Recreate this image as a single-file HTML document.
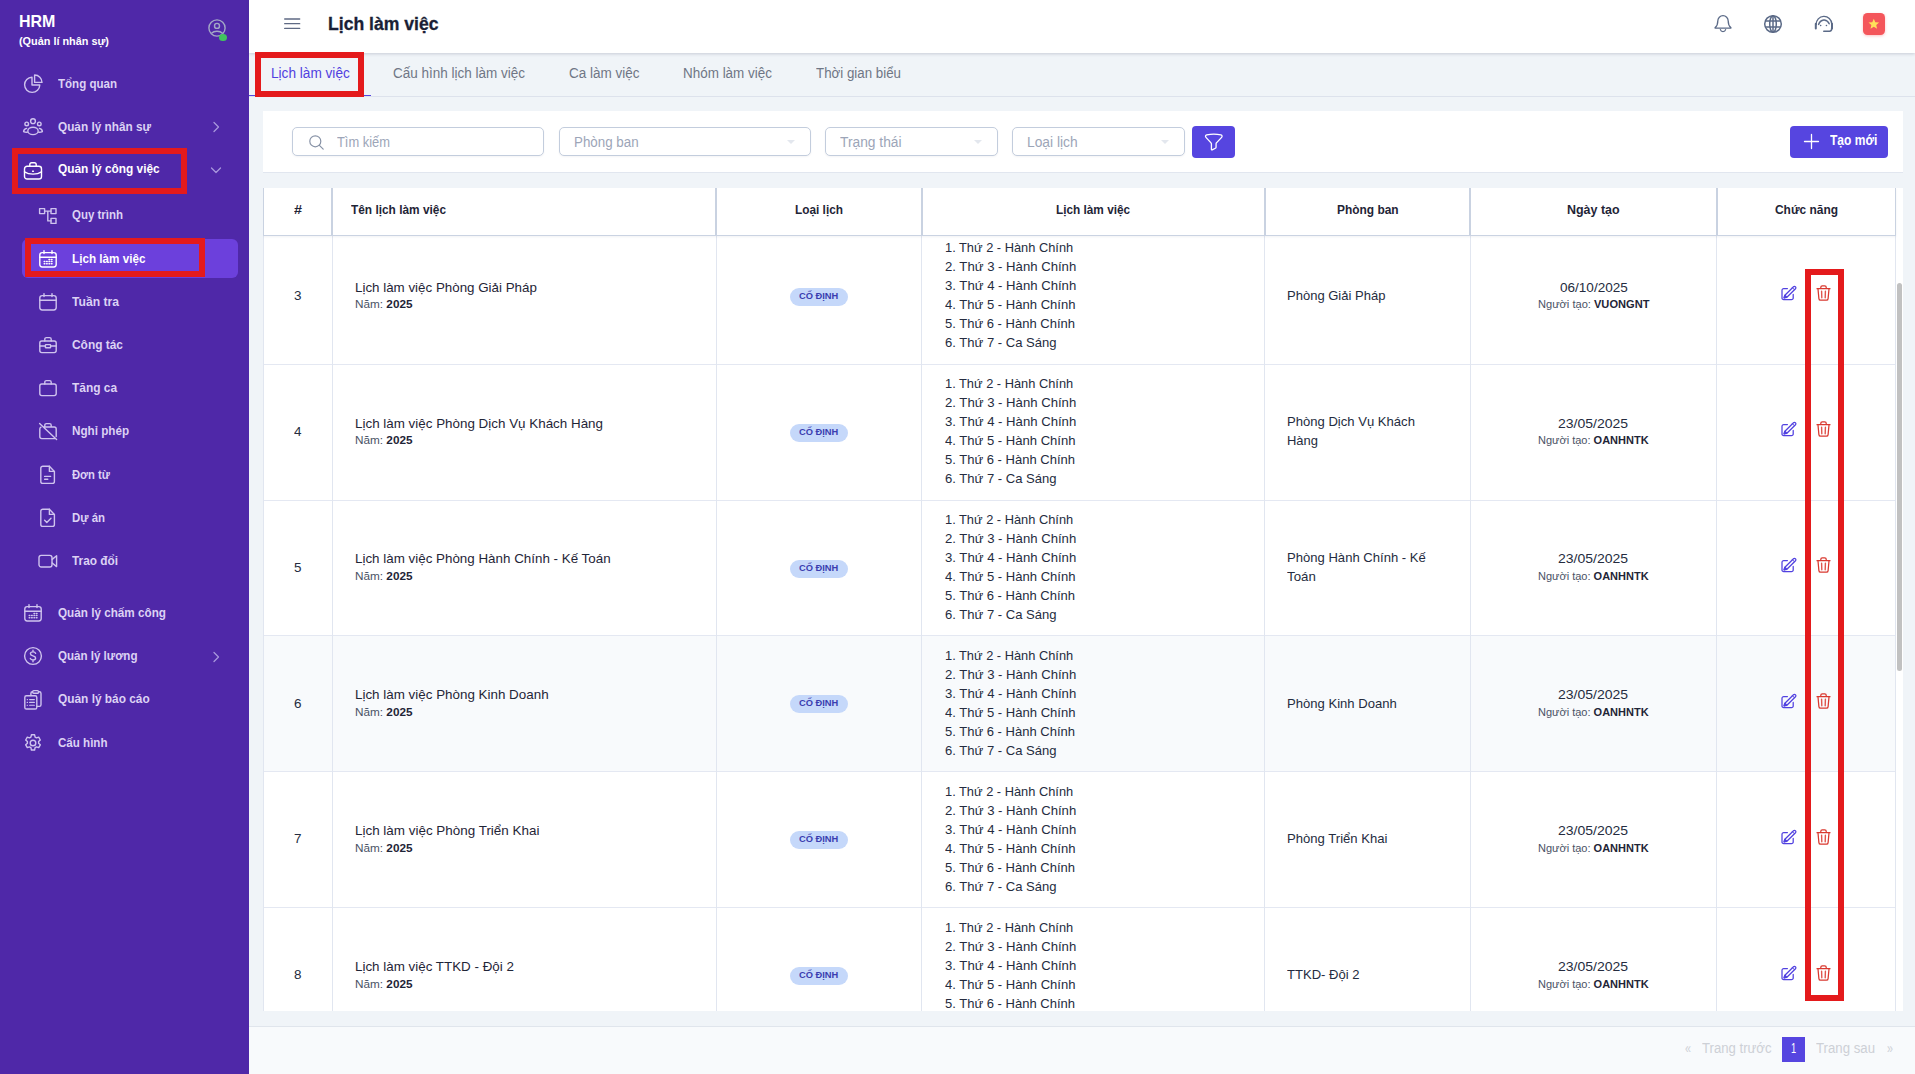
<!DOCTYPE html>
<html lang="vi">
<head>
<meta charset="utf-8">
<title>Lịch làm việc</title>
<style>
*{box-sizing:border-box;margin:0;padding:0}
html,body{width:1915px;height:1074px;overflow:hidden}
body{font-family:"Liberation Sans",sans-serif;background:#f0f4f8;position:relative;color:#1f2537;font-size:13px}
.abs{position:absolute}
svg{display:block;overflow:visible}
.t{position:absolute;display:block;white-space:nowrap;line-height:20px;transform-origin:0 50%}
.t b{font-weight:bold}
#sb{position:absolute;left:0;top:0;width:249px;height:1074px;background:#4f28a8}
.ic{position:absolute;width:20px;height:20px;stroke:#cfc3ee;fill:none;stroke-width:1.4;stroke-linecap:round;stroke-linejoin:round}
.ic.on{stroke:#fff}
.chev{position:absolute;width:12px;height:12px;stroke:#a897dd;fill:none;stroke-width:1.3;stroke-linecap:round;stroke-linejoin:round}
.actbg{position:absolute;left:22px;top:239px;width:216px;height:38.5px;background:#6c40dc;border-radius:6px}
.red{position:absolute;border:6px solid #e41a1c}
#hd{position:absolute;left:249px;top:0;width:1666px;height:53px;background:#fff;box-shadow:0 1px 3px rgba(60,70,100,.22)}
#tabs{position:absolute;left:249px;top:53px;width:1666px;height:44px;border-bottom:1px solid #dde2ec}
#tabs .ul{position:absolute;left:0;top:41.6px;width:122px;height:1.4px;background:#5546e0}
#fc{position:absolute;left:263px;top:111px;width:1640px;height:62px;background:#fff;border-bottom:1px solid #e1e6ef}
.inp{position:absolute;top:16.3px;height:28.4px;border:1px solid #c3cddd;border-radius:5px;background:#fff;box-shadow:0 1px 2px rgba(30,40,70,.05)}
.car{position:absolute;top:12px;width:0;height:0;border-left:4.5px solid transparent;border-right:4.5px solid transparent;border-top:4px solid #e3e7ee}
.btn{position:absolute;background:#5645e0;border-radius:4px;color:#fff}
#tb{position:absolute;left:263px;top:187.7px;width:1640px;height:823.3px;background:#fff;overflow:hidden}
#th{position:absolute;left:0;top:0;width:1633px;height:48.3px;background:#fff;border-bottom:1px solid #cad3e2;z-index:3;box-shadow:0 1px 2px rgba(120,130,150,.10)}
#th i{position:absolute;top:0;width:2px;height:47.3px;background:#c9d2e1}
.vl{position:absolute;top:48px;width:1px;height:776px;background:#e1e6f0;z-index:2}
.row{position:absolute;left:0;width:1633px;border-bottom:1px solid #e4e8f2}
.bd{position:absolute;width:58.3px;height:18px;border-radius:9px;background:#c5d8fa}
#ft{position:absolute;left:249px;top:1026px;width:1666px;height:48px;background:#f8fafc;border-top:1px solid #e0e5ec}
</style>
</head>
<body>
<div id="sb">
  <svg class="abs" style="left:206.800px;top:17.700px" width="20" height="20" viewBox="0 0 20 20" fill="none" stroke="#a3a8c6" stroke-width="1.4"><circle cx="10" cy="10" r="8.1"/><circle cx="10" cy="7.9" r="2.5"/><path d="M4.5 15.200c1.2-1.2 3.1-1.9 5.5-1.900s4.3.7 5.5 1.9"/></svg>
  <div class="abs" style="left:219px;top:33.700px;width:8px;height:7.600px;border-radius:50%;background:#41c35f"></div>
  <div class="actbg"></div>
  <span class="t" style="left:18.80px;top:12.00px;font-size:17px;color:#fff;font-weight:bold;transform:scaleX(0.9401)">HRM</span>
  <span class="t" style="left:19.10px;top:31.00px;font-size:10.5px;color:#fff;font-weight:bold;transform:scaleX(1.0350)">(Quản lí nhân sự)</span>
  <svg class="ic" style="left:23px;top:74.3px" viewBox="0 0 20 20"><path d="M9 3.200A7.6 7.6 0 1 0 16.8 11H9z"/><path d="M11.6 1v7.400H19A7.4 7.4 0 0 0 11.6 1z"/></svg>
  <span class="t" style="left:58.10px;top:74.00px;font-size:13px;color:#dcd2f4;font-weight:bold;transform:scaleX(0.8881)">Tổng quan</span>
  <svg class="ic" style="left:23px;top:117.1px" viewBox="0 0 20 20"><circle cx="10" cy="4.2" r="2.4"/><circle cx="3.7" cy="6.9" r="1.8"/><circle cx="16.3" cy="6.9" r="1.8"/><ellipse cx="10" cy="13.9" rx="5.2" ry="3.7"/><path d="M3.6 11.400c-1.7.4-2.9 1.5-3 3.2 1.1.6 2.3.8 3.6.7M16.4 11.400c1.7.4 2.9 1.5 3 3.2-1.1.6-2.3.8-3.6.7"/></svg>
  <span class="t" style="left:58.10px;top:117.00px;font-size:13px;color:#dcd2f4;font-weight:bold;transform:scaleX(0.9063)">Quản lý nhân sự</span>
  <svg class="chev" style="left:210px;top:121.0px" viewBox="0 0 12 12"><path d="M4 1.500l4.5 4.500L4 10.5"/></svg>
  <svg class="ic on" style="left:23px;top:160.6px" viewBox="0 0 20 20"><rect x="1.5" y="5.3" width="17" height="12.7" rx="2.6"/><path d="M6.8 5.200V3.600a1.8 1.8 0 0 1 1.8-1.800h2.800a1.8 1.8 0 0 1 1.8 1.800v1.600M1.5 10.800c2.4 1.6 5.3 2.3 8.5 2.300s6.1-.7 8.5-2.300M9.6 10.300h.8"/></svg>
  <span class="t" style="left:58.10px;top:159.00px;font-size:13px;color:#fff;font-weight:bold;transform:scaleX(0.9140)">Quản lý công việc</span>
  <svg class="chev" style="left:210px;top:164px" viewBox="0 0 12 12"><path d="M1.5 4l4.5 4.500L10.5 4"/></svg>
  <svg class="ic" style="left:38px;top:205.8px" viewBox="0 0 20 20"><rect x="1.6" y="2.6" width="5" height="5"/><rect x="13" y="2.6" width="5" height="5"/><rect x="13" y="12.4" width="5" height="5"/><path d="M6.6 5.100H13M9.8 5.100v9.800H13"/></svg>
  <span class="t" style="left:72.30px;top:205.00px;font-size:13px;color:#dcd2f4;font-weight:bold;transform:scaleX(0.8826)">Quy trình</span>
  <svg class="ic on" style="left:38px;top:248.5px" viewBox="0 0 20 20"><rect x="1.8" y="3.6" width="16.4" height="14.4" rx="2.4"/><path d="M1.8 8.200h16.400M6 1.600v3M14 1.600v3"/><path d="M6.2 12.600h.6M8.6 12.600h.6M11 12.600h.6M13.4 12.600h.6M6.2 14.800h.6M8.6 14.800h.6M11 14.800h.6M13.4 14.800h.6M11 10.600h.6M13.4 10.600h.6" stroke-width="1.5"/></svg>
  <span class="t" style="left:72.30px;top:249.00px;font-size:13px;color:#fff;font-weight:bold;transform:scaleX(0.9001)">Lịch làm việc</span>
  <svg class="ic" style="left:38px;top:292px" viewBox="0 0 20 20"><rect x="1.8" y="3.6" width="16.4" height="14.4" rx="2.4"/><path d="M1.8 8.200h16.400M6 1.600v3M14 1.600v3"/></svg>
  <span class="t" style="left:72.30px;top:292.00px;font-size:13px;color:#dcd2f4;font-weight:bold;transform:scaleX(0.9339)">Tuần tra</span>
  <svg class="ic" style="left:38px;top:335px" viewBox="0 0 20 20"><rect x="1.8" y="6" width="16.4" height="11.6" rx="2"/><path d="M6.8 6V4.200a1.6 1.6 0 0 1 1.6-1.600h3.200a1.6 1.6 0 0 1 1.6 1.600V6M1.8 11h5.600M12.6 11h5.6"/><rect x="7.4" y="9.6" width="5.2" height="3.2" rx=".6"/></svg>
  <span class="t" style="left:72.30px;top:335.00px;font-size:13px;color:#dcd2f4;font-weight:bold;transform:scaleX(0.9169)">Công tác</span>
  <svg class="ic" style="left:38px;top:378px" viewBox="0 0 20 20"><rect x="1.8" y="6" width="16.4" height="11.6" rx="2"/><path d="M6.8 6V4.200a1.6 1.6 0 0 1 1.6-1.600h3.200a1.6 1.6 0 0 1 1.6 1.600V6"/></svg>
  <span class="t" style="left:72.30px;top:378.00px;font-size:13px;color:#dcd2f4;font-weight:bold;transform:scaleX(0.9160)">Tăng ca</span>
  <svg class="ic" style="left:38px;top:421px" viewBox="0 0 20 20"><path d="M5.4 6H16.200a2 2 0 0 1 2 2v7.600M16.6 17.600H3.800a2 2 0 0 1-2-2V8a2 2 0 0 1 1.2-1.800M6.8 5.600V4.200a1.6 1.6 0 0 1 1.6-1.600h3.200a1.6 1.6 0 0 1 1.6 1.600V6M1.6 2.600l17 15.8"/></svg>
  <span class="t" style="left:72.30px;top:421.00px;font-size:13px;color:#dcd2f4;font-weight:bold;transform:scaleX(0.8970)">Nghỉ phép</span>
  <svg class="ic" style="left:38px;top:464.5px" viewBox="0 0 20 20"><path d="M11.4 1.200H4.800a2 2 0 0 0-2 2v13.200a2 2 0 0 0 2 2h9.600a2 2 0 0 0 2-2V6.400z"/><path d="M11.4 1.200v5.200h5M6.6 11.400h6M6.6 14.200h3.2"/></svg>
  <span class="t" style="left:72.30px;top:465.00px;font-size:13px;color:#dcd2f4;font-weight:bold;transform:scaleX(0.8649)">Đơn từ</span>
  <svg class="ic" style="left:38px;top:507.5px" viewBox="0 0 20 20"><path d="M11.4 1.200H4.800a2 2 0 0 0-2 2v13.200a2 2 0 0 0 2 2h9.600a2 2 0 0 0 2-2V6.400z"/><path d="M11.4 1.200v5.200h5M6.6 12.200l2.2 2.2 4.2-4.2"/></svg>
  <span class="t" style="left:72.30px;top:508.00px;font-size:13px;color:#dcd2f4;font-weight:bold;transform:scaleX(0.8778)">Dự án</span>
  <svg class="ic" style="left:38px;top:551px" viewBox="0 0 20 20"><rect x="1" y="4.4" width="13" height="11.6" rx="2.2"/><path d="M14.2 8.400l4.4-3.600v10.800l-4.4-3.6"/></svg>
  <span class="t" style="left:72.30px;top:551.00px;font-size:13px;color:#dcd2f4;font-weight:bold;transform:scaleX(0.9098)">Trao đổi</span>
  <svg class="ic" style="left:23px;top:603px" viewBox="0 0 20 20"><rect x="1.8" y="3.6" width="16.4" height="14.4" rx="2.4"/><path d="M1.8 8.200h16.400M6 1.600v3M14 1.600v3"/><path d="M6.2 12.600h.6M8.6 12.600h.6M11 12.600h.6M13.4 12.600h.6M6.2 14.800h.6M8.6 14.800h.6M11 14.800h.6M13.4 14.800h.6M11 10.600h.6M13.4 10.600h.6" stroke-width="1.5"/></svg>
  <span class="t" style="left:58.10px;top:603.00px;font-size:13px;color:#dcd2f4;font-weight:bold;transform:scaleX(0.9006)">Quản lý chấm công</span>
  <svg class="ic" style="left:23px;top:646px" viewBox="0 0 20 20"><circle cx="10" cy="10" r="8.4"/><path d="M12.6 7.400c-.3-1-1.3-1.5-2.6-1.5-1.5 0-2.6.7-2.6 1.9 0 2.8 5.2 1.4 5.2 4.2 0 1.2-1.1 2-2.6 2-1.4 0-2.4-.6-2.7-1.600M10 4.200v1.700M10 14v1.8"/></svg>
  <span class="t" style="left:58.10px;top:646.00px;font-size:13px;color:#dcd2f4;font-weight:bold;transform:scaleX(0.8887)">Quản lý lương</span>
  <svg class="chev" style="left:210px;top:650.5px" viewBox="0 0 12 12"><path d="M4 1.500l4.5 4.500L4 10.5"/></svg>
  <svg class="ic" style="left:23px;top:690px" viewBox="0 0 20 20"><rect x="1.8" y="5.8" width="12" height="13.2" rx="1.6"/><path d="M7.9 5.600V3.400a1.6 1.6 0 0 1 1.6-1.600M15.6 1.800h.8a1.6 1.6 0 0 1 1.6 1.600v11.400a1.6 1.6 0 0 1-1.6 1.600h-2.4"/><rect x="9.7" y=".6" width="5.8" height="2.6" rx="1"/><path d="M4.2 9.600h.3M4.2 12.400h.3M4.2 15.200h.3M6.6 9.600h4.800M6.6 12.400h4.800M6.6 15.200h4.8" stroke-width="1.1"/></svg>
  <span class="t" style="left:58.10px;top:689.00px;font-size:13px;color:#dcd2f4;font-weight:bold;transform:scaleX(0.9131)">Quản lý báo cáo</span>
  <svg class="ic" style="left:23px;top:733px" viewBox="0 0 20 20"><circle cx="10" cy="10" r="2.8"/><path d="M8.4 1.800h3.200l.5 2.3 1.4.8 2.2-.7 1.6 2.8-1.7 1.600v1.600l1.7 1.6-1.6 2.8-2.2-.7-1.4.8-.5 2.300H8.400l-.5-2.3-1.4-.8-2.2.7-1.6-2.8 1.7-1.600V8.600L2.7 7l1.6-2.8 2.2.7 1.4-.8z"/></svg>
  <span class="t" style="left:58.10px;top:733.00px;font-size:13px;color:#dcd2f4;font-weight:bold;transform:scaleX(0.8901)">Cấu hình</span>
</div>
<div id="hd">
  <svg class="abs" style="left:34.600px;top:18.100px" width="16.4" height="12" viewBox="0 0 16.4 12" stroke="#5f6a84" stroke-width="1.35" stroke-linecap="round"><path d="M.7 1h15M.7 5.700h15M.7 10.400h15"/></svg>
  <svg class="abs" style="left:1463.800px;top:13.800px" width="20" height="20" viewBox="0 0 20 20" fill="none" stroke="#5b6a87" stroke-width="1.3" stroke-linecap="round" stroke-linejoin="round"><path d="M10 1.700a5.2 5.2 0 0 0-5.2 5.200c0 3.1-.6 4.9-2.6 6.5-.3.3-.1.8.3.800h15c.4 0 .6-.5.3-.8-2-1.6-2.6-3.4-2.6-6.500A5.2 5.2 0 0 0 10 1.700zM7.4 15.600a2.7 2.7 0 0 0 5.2 0"/></svg>
  <svg class="abs" style="left:1513.900px;top:13.800px" width="20" height="20" viewBox="0 0 20 20" fill="none" stroke="#5b6a87" stroke-width="1.5"><circle cx="10" cy="10" r="8.3"/><ellipse cx="10" cy="10" rx="3.3" ry="8.3"/><path d="M10 1.700v16.600M2.3 6.900h15.400M2.3 13.100h15.4"/></svg>
  <svg class="abs" style="left:1565px;top:13.800px" width="20" height="20" viewBox="0 0 20 20" fill="none" stroke="#5b6a87" stroke-width="1.4" stroke-linecap="round" stroke-linejoin="round"><path d="M2.2 10.500a7.5 7.5 0 0 1 15.6-.6"/><path d="M1.8 9.800v4.800M18 9.800v4.6" stroke-width="2"/><path d="M17.6 14.800v.4a2 2 0 0 1-2 2H9.8" stroke-width="1.6"/><path d="M4.6 10.400c.8-2.4 2.6-4 5.2-4.400M10.4 6c2.4.4 4 1.8 4.8 3.8" stroke-width="1.5"/><path d="M6.6 11.600h.1M12.4 11.600h.1" stroke-width="1.5"/></svg>
  <div class="abs" style="left:1614px;top:13px;width:22px;height:22px;border-radius:4.500px;background:#f4565b;box-shadow:0 1px 3px rgba(244,86,91,.35)"><svg class="abs" style="left:5.200px;top:5.100px" width="11.6" height="11.6" viewBox="0 0 24 24" fill="#ffe15a"><path d="M12 1.500l3.1 7.3 7.9.7-6 5.2 1.8 7.800L12 18.300l-6.8 4.200L7 14.7 1 9.500l7.9-.7z"/></svg></div>
</div>
<div id="tabs"><div class="ul"></div></div>
<div id="fc">
  <div class="inp" style="left:29.200px;width:251.600px"><svg class="abs" style="left:16px;top:6.900px" width="15" height="15" viewBox="0 0 15 15" fill="none" stroke="#8792a6" stroke-width="1.2" stroke-linecap="round"><circle cx="6.3" cy="6.3" r="5.5"/><path d="M10.4 10.400l3.8 3.8"/></svg></div>
  <div class="inp" style="left:296.300px;width:251.700px"><span class="car" style="left:227px"></span></div>
  <div class="inp" style="left:562px;width:173.200px"><span class="car" style="left:147.500px"></span></div>
  <div class="inp" style="left:748.800px;width:173.200px"><span class="car" style="left:148px"></span></div>
  <div class="btn" style="left:929px;top:15px;width:43px;height:32px"><svg class="abs" style="left:12.2px;top:7px" width="19.6" height="18" viewBox="0 0 19 18" preserveAspectRatio="none" fill="none" stroke="#fff" stroke-width="1.25" stroke-linejoin="round"><path d="M2.6 1.800C6.5 .9 12.5 .9 16.4 1.800c1.2.3 1.5 1.6.7 2.500L12.1 9.800c-.3.3-.4.7-.4 1.100v3.300c0 .5-.3.9-.7 1.100l-3 1.600c-.4.2-.8-.1-.8-.5v-5.500c0-.4-.2-.8-.4-1.100L1.9 4.300c-.8-.9-.5-2.2.7-2.500z"/></svg></div>
  <div class="btn" style="left:1527px;top:15px;width:98px;height:32px"><svg class="abs" style="left:14.400px;top:7.700px" width="15" height="15" viewBox="0 0 15 15" stroke="#fff" stroke-width="1.3" stroke-linecap="round"><path d="M7.5 .5v14M.5 7.500h14"/></svg></div>
</div>
<div id="tb">
  <div id="th">
    <i style="left:0;width:1px"></i><i style="left:68px"></i><i style="left:452px"></i><i style="left:658px"></i><i style="left:1001px"></i><i style="left:1206px"></i><i style="left:1453px"></i><i style="left:1632px;width:1px"></i>
    <span class="t" style="left:31.00px;top:12.30px;font-size:12.5px;color:#1f2537;font-weight:bold;transform:scaleX(1.1506)">#</span>
    <span class="t" style="left:88.00px;top:12.30px;font-size:12.5px;color:#1f2537;font-weight:bold;transform:scaleX(0.9496)">Tên lịch làm việc</span>
    <span class="t" style="left:532.10px;top:12.30px;font-size:12.5px;color:#1f2537;font-weight:bold;transform:scaleX(0.9467)">Loại lịch</span>
    <span class="t" style="left:793.30px;top:12.30px;font-size:12.5px;color:#1f2537;font-weight:bold;transform:scaleX(0.9438)">Lịch làm việc</span>
    <span class="t" style="left:1073.60px;top:12.30px;font-size:12.5px;color:#1f2537;font-weight:bold;transform:scaleX(0.9539)">Phòng ban</span>
    <span class="t" style="left:1304.10px;top:12.30px;font-size:12.5px;color:#1f2537;font-weight:bold;transform:scaleX(0.9963)">Ngày tạo</span>
    <span class="t" style="left:1511.60px;top:12.30px;font-size:12.5px;color:#1f2537;font-weight:bold;transform:scaleX(0.9545)">Chức năng</span>
  </div>
  <div class="row" style="top:41.3px;height:136px"><span class="t" style="left:31.30px;top:57.00px;font-size:13.5px;color:#252c40;transform:scaleX(0.9979)">3</span><span class="t" style="left:92.10px;top:49.00px;font-size:13.5px;color:#1f2537;transform:scaleX(0.9893)">Lịch làm việc Phòng Giải Pháp</span><span class="t" style="left:92.10px;top:65.00px;font-size:11.7px;color:#4a5265;transform:scaleX(1.0055)">Năm: <b style="color:#1f2537">2025</b></span><div class="bd" style="left:526.8px;top:59.0px"></div><span class="t" style="left:536.30px;top:57.00px;font-size:9.4px;color:#3a3db0;font-weight:bold;transform:scaleX(0.9926)">CỐ ĐỊNH</span><span class="t" style="left:681.70px;top:9.00px;font-size:13.5px;color:#252c40;transform:scaleX(0.9505)">1. Thứ 2 - Hành Chính</span><span class="t" style="left:681.70px;top:28.00px;font-size:13.5px;color:#252c40;transform:scaleX(0.9728)">2. Thứ 3 - Hành Chính</span><span class="t" style="left:681.70px;top:47.00px;font-size:13.5px;color:#252c40;transform:scaleX(0.9728)">3. Thứ 4 - Hành Chính</span><span class="t" style="left:681.70px;top:66.00px;font-size:13.5px;color:#252c40;transform:scaleX(0.9676)">4. Thứ 5 - Hành Chính</span><span class="t" style="left:681.70px;top:85.00px;font-size:13.5px;color:#252c40;transform:scaleX(0.9639)">5. Thứ 6 - Hành Chính</span><span class="t" style="left:681.70px;top:104.00px;font-size:13.5px;color:#252c40;transform:scaleX(0.9674)">6. Thứ 7 - Ca Sáng</span><span class="t" style="left:1023.80px;top:57.00px;font-size:13.5px;color:#252c40;transform:scaleX(0.9640)">Phòng Giải Pháp</span><span class="t" style="left:1296.60px;top:49.00px;font-size:13.5px;color:#252c40;transform:scaleX(1.0033)">06/10/2025</span><span class="t" style="left:1274.80px;top:65.00px;font-size:11.7px;color:#4a5265;transform:scaleX(0.9485)">Người tạo: <b style="color:#1f2537">VUONGNT</b></span><svg class="abs" style="left:1517.8px;top:55.9px" width="16" height="16" viewBox="0 0 16 16"><g fill="none" stroke="#5141e0" stroke-width="1.25" stroke-linecap="round" stroke-linejoin="round"><path d="M6.4 3.600H2.700A1.7 1.7 0 0 0 1 5.300v7.600a1.7 1.7 0 0 0 1.7 1.700h7.800a1.7 1.7 0 0 0 1.7-1.700V9.4"/><path d="M3.1 12.800l.8-2.5 8.6-8.600a1.250 1.250 0 0 1 1.8 0l.2.200a1.250 1.250 0 0 1 0 1.800l-8.6 8.600z"/><path d="M11.5 2.800l1.9 1.9" stroke-width="1"/><path d="M3.1 12.800l.8-2.5 1.7 1.700z" fill="#5141e0"/></g></svg><svg class="abs" style="left:1553.3px;top:55.9px" width="15" height="16" viewBox="0 0 15 16"><g fill="none" stroke="#d9382f" stroke-width="1.25" stroke-linecap="round" stroke-linejoin="round"><path d="M1 3.700h13M4.8 3.500V2.300a1.5 1.5 0 0 1 1.5-1.500h2.400a1.5 1.5 0 0 1 1.5 1.500v1.200M2 4l.9 9.600a1.7 1.7 0 0 0 1.7 1.600h5.800a1.7 1.7 0 0 0 1.7-1.600L13 4"/><path d="M5.6 6.200l.2 6.600M9.4 6.200l-.2 6.6" stroke-width="1.4" stroke="#e0564e"/></g></svg></div>
  <div class="row" style="top:177.3px;height:136px"><span class="t" style="left:31.30px;top:57.00px;font-size:13.5px;color:#252c40;transform:scaleX(0.9979)">4</span><span class="t" style="left:92.10px;top:49.00px;font-size:13.5px;color:#1f2537;transform:scaleX(0.9924)">Lịch làm việc Phòng Dịch Vụ Khách Hàng</span><span class="t" style="left:92.10px;top:65.00px;font-size:11.7px;color:#4a5265;transform:scaleX(1.0055)">Năm: <b style="color:#1f2537">2025</b></span><div class="bd" style="left:526.8px;top:59.0px"></div><span class="t" style="left:536.30px;top:57.00px;font-size:9.4px;color:#3a3db0;font-weight:bold;transform:scaleX(0.9926)">CỐ ĐỊNH</span><span class="t" style="left:681.70px;top:9.00px;font-size:13.5px;color:#252c40;transform:scaleX(0.9505)">1. Thứ 2 - Hành Chính</span><span class="t" style="left:681.70px;top:28.00px;font-size:13.5px;color:#252c40;transform:scaleX(0.9728)">2. Thứ 3 - Hành Chính</span><span class="t" style="left:681.70px;top:47.00px;font-size:13.5px;color:#252c40;transform:scaleX(0.9728)">3. Thứ 4 - Hành Chính</span><span class="t" style="left:681.70px;top:66.00px;font-size:13.5px;color:#252c40;transform:scaleX(0.9676)">4. Thứ 5 - Hành Chính</span><span class="t" style="left:681.70px;top:85.00px;font-size:13.5px;color:#252c40;transform:scaleX(0.9639)">5. Thứ 6 - Hành Chính</span><span class="t" style="left:681.70px;top:104.00px;font-size:13.5px;color:#252c40;transform:scaleX(0.9674)">6. Thứ 7 - Ca Sáng</span><span class="t" style="left:1023.80px;top:47.00px;font-size:13.5px;color:#252c40;transform:scaleX(0.9683)">Phòng Dịch Vụ Khách</span><span class="t" style="left:1023.80px;top:66.00px;font-size:13.5px;color:#252c40;transform:scaleX(0.9603)">Hàng</span><span class="t" style="left:1295.45px;top:49.00px;font-size:13.5px;color:#252c40;transform:scaleX(1.0373)">23/05/2025</span><span class="t" style="left:1275.20px;top:65.00px;font-size:11.7px;color:#4a5265;transform:scaleX(0.9417)">Người tạo: <b style="color:#1f2537">OANHNTK</b></span><svg class="abs" style="left:1517.8px;top:55.9px" width="16" height="16" viewBox="0 0 16 16"><g fill="none" stroke="#5141e0" stroke-width="1.25" stroke-linecap="round" stroke-linejoin="round"><path d="M6.4 3.600H2.700A1.7 1.7 0 0 0 1 5.300v7.600a1.7 1.7 0 0 0 1.7 1.700h7.800a1.7 1.7 0 0 0 1.7-1.700V9.4"/><path d="M3.1 12.800l.8-2.5 8.6-8.600a1.250 1.250 0 0 1 1.8 0l.2.200a1.250 1.250 0 0 1 0 1.800l-8.6 8.600z"/><path d="M11.5 2.800l1.9 1.9" stroke-width="1"/><path d="M3.1 12.800l.8-2.5 1.7 1.700z" fill="#5141e0"/></g></svg><svg class="abs" style="left:1553.3px;top:55.9px" width="15" height="16" viewBox="0 0 15 16"><g fill="none" stroke="#d9382f" stroke-width="1.25" stroke-linecap="round" stroke-linejoin="round"><path d="M1 3.700h13M4.8 3.500V2.300a1.5 1.5 0 0 1 1.5-1.500h2.400a1.5 1.5 0 0 1 1.5 1.500v1.200M2 4l.9 9.600a1.7 1.7 0 0 0 1.7 1.600h5.800a1.7 1.7 0 0 0 1.7-1.600L13 4"/><path d="M5.6 6.200l.2 6.600M9.4 6.200l-.2 6.6" stroke-width="1.4" stroke="#e0564e"/></g></svg></div>
  <div class="row" style="top:313.3px;height:135px"><span class="t" style="left:31.30px;top:57.00px;font-size:13.5px;color:#252c40;transform:scaleX(0.9979)">5</span><span class="t" style="left:92.10px;top:48.00px;font-size:13.5px;color:#1f2537;transform:scaleX(0.9911)">Lịch làm việc Phòng Hành Chính - Kế Toán</span><span class="t" style="left:92.10px;top:65.00px;font-size:11.7px;color:#4a5265;transform:scaleX(1.0055)">Năm: <b style="color:#1f2537">2025</b></span><div class="bd" style="left:526.8px;top:59.0px"></div><span class="t" style="left:536.30px;top:57.00px;font-size:9.4px;color:#3a3db0;font-weight:bold;transform:scaleX(0.9926)">CỐ ĐỊNH</span><span class="t" style="left:681.70px;top:9.00px;font-size:13.5px;color:#252c40;transform:scaleX(0.9505)">1. Thứ 2 - Hành Chính</span><span class="t" style="left:681.70px;top:28.00px;font-size:13.5px;color:#252c40;transform:scaleX(0.9728)">2. Thứ 3 - Hành Chính</span><span class="t" style="left:681.70px;top:47.00px;font-size:13.5px;color:#252c40;transform:scaleX(0.9728)">3. Thứ 4 - Hành Chính</span><span class="t" style="left:681.70px;top:66.00px;font-size:13.5px;color:#252c40;transform:scaleX(0.9676)">4. Thứ 5 - Hành Chính</span><span class="t" style="left:681.70px;top:85.00px;font-size:13.5px;color:#252c40;transform:scaleX(0.9639)">5. Thứ 6 - Hành Chính</span><span class="t" style="left:681.70px;top:104.00px;font-size:13.5px;color:#252c40;transform:scaleX(0.9674)">6. Thứ 7 - Ca Sáng</span><span class="t" style="left:1023.80px;top:47.00px;font-size:13.5px;color:#252c40;transform:scaleX(0.9682)">Phòng Hành Chính - Kế</span><span class="t" style="left:1023.80px;top:66.00px;font-size:13.5px;color:#252c40;transform:scaleX(0.9836)">Toán</span><span class="t" style="left:1295.45px;top:48.00px;font-size:13.5px;color:#252c40;transform:scaleX(1.0373)">23/05/2025</span><span class="t" style="left:1275.20px;top:65.00px;font-size:11.7px;color:#4a5265;transform:scaleX(0.9417)">Người tạo: <b style="color:#1f2537">OANHNTK</b></span><svg class="abs" style="left:1517.8px;top:55.9px" width="16" height="16" viewBox="0 0 16 16"><g fill="none" stroke="#5141e0" stroke-width="1.25" stroke-linecap="round" stroke-linejoin="round"><path d="M6.4 3.600H2.700A1.7 1.7 0 0 0 1 5.300v7.600a1.7 1.7 0 0 0 1.7 1.700h7.800a1.7 1.7 0 0 0 1.7-1.700V9.4"/><path d="M3.1 12.800l.8-2.5 8.6-8.600a1.250 1.250 0 0 1 1.8 0l.2.200a1.250 1.250 0 0 1 0 1.800l-8.6 8.600z"/><path d="M11.5 2.800l1.9 1.9" stroke-width="1"/><path d="M3.1 12.800l.8-2.5 1.7 1.700z" fill="#5141e0"/></g></svg><svg class="abs" style="left:1553.3px;top:55.9px" width="15" height="16" viewBox="0 0 15 16"><g fill="none" stroke="#d9382f" stroke-width="1.25" stroke-linecap="round" stroke-linejoin="round"><path d="M1 3.700h13M4.8 3.500V2.300a1.5 1.5 0 0 1 1.5-1.500h2.400a1.5 1.5 0 0 1 1.5 1.500v1.200M2 4l.9 9.600a1.7 1.7 0 0 0 1.7 1.600h5.800a1.7 1.7 0 0 0 1.7-1.600L13 4"/><path d="M5.6 6.200l.2 6.600M9.4 6.200l-.2 6.6" stroke-width="1.4" stroke="#e0564e"/></g></svg></div>
  <div class="row" style="top:448.3px;height:136px;background:#f8fafc"><span class="t" style="left:31.30px;top:58.00px;font-size:13.5px;color:#252c40;transform:scaleX(0.9979)">6</span><span class="t" style="left:92.10px;top:49.00px;font-size:13.5px;color:#1f2537;transform:scaleX(0.9922)">Lịch làm việc Phòng Kinh Doanh</span><span class="t" style="left:92.10px;top:66.00px;font-size:11.7px;color:#4a5265;transform:scaleX(1.0055)">Năm: <b style="color:#1f2537">2025</b></span><div class="bd" style="left:526.8px;top:59.0px"></div><span class="t" style="left:536.30px;top:57.00px;font-size:9.4px;color:#3a3db0;font-weight:bold;transform:scaleX(0.9926)">CỐ ĐỊNH</span><span class="t" style="left:681.70px;top:10.00px;font-size:13.5px;color:#252c40;transform:scaleX(0.9505)">1. Thứ 2 - Hành Chính</span><span class="t" style="left:681.70px;top:29.00px;font-size:13.5px;color:#252c40;transform:scaleX(0.9728)">2. Thứ 3 - Hành Chính</span><span class="t" style="left:681.70px;top:48.00px;font-size:13.5px;color:#252c40;transform:scaleX(0.9728)">3. Thứ 4 - Hành Chính</span><span class="t" style="left:681.70px;top:67.00px;font-size:13.5px;color:#252c40;transform:scaleX(0.9676)">4. Thứ 5 - Hành Chính</span><span class="t" style="left:681.70px;top:86.00px;font-size:13.5px;color:#252c40;transform:scaleX(0.9639)">5. Thứ 6 - Hành Chính</span><span class="t" style="left:681.70px;top:105.00px;font-size:13.5px;color:#252c40;transform:scaleX(0.9674)">6. Thứ 7 - Ca Sáng</span><span class="t" style="left:1023.80px;top:58.00px;font-size:13.5px;color:#252c40;transform:scaleX(0.9687)">Phòng Kinh Doanh</span><span class="t" style="left:1295.45px;top:49.00px;font-size:13.5px;color:#252c40;transform:scaleX(1.0373)">23/05/2025</span><span class="t" style="left:1275.20px;top:66.00px;font-size:11.7px;color:#4a5265;transform:scaleX(0.9417)">Người tạo: <b style="color:#1f2537">OANHNTK</b></span><svg class="abs" style="left:1517.8px;top:56.9px" width="16" height="16" viewBox="0 0 16 16"><g fill="none" stroke="#5141e0" stroke-width="1.25" stroke-linecap="round" stroke-linejoin="round"><path d="M6.4 3.600H2.700A1.7 1.7 0 0 0 1 5.300v7.600a1.7 1.7 0 0 0 1.7 1.700h7.800a1.7 1.7 0 0 0 1.7-1.700V9.4"/><path d="M3.1 12.800l.8-2.5 8.6-8.600a1.250 1.250 0 0 1 1.8 0l.2.200a1.250 1.250 0 0 1 0 1.800l-8.6 8.600z"/><path d="M11.5 2.800l1.9 1.9" stroke-width="1"/><path d="M3.1 12.800l.8-2.5 1.7 1.700z" fill="#5141e0"/></g></svg><svg class="abs" style="left:1553.3px;top:56.9px" width="15" height="16" viewBox="0 0 15 16"><g fill="none" stroke="#d9382f" stroke-width="1.25" stroke-linecap="round" stroke-linejoin="round"><path d="M1 3.700h13M4.8 3.500V2.300a1.5 1.5 0 0 1 1.5-1.500h2.400a1.5 1.5 0 0 1 1.5 1.500v1.200M2 4l.9 9.600a1.7 1.7 0 0 0 1.7 1.600h5.800a1.7 1.7 0 0 0 1.7-1.600L13 4"/><path d="M5.6 6.200l.2 6.600M9.4 6.200l-.2 6.6" stroke-width="1.4" stroke="#e0564e"/></g></svg></div>
  <div class="row" style="top:584.3px;height:136px"><span class="t" style="left:31.30px;top:57.00px;font-size:13.5px;color:#252c40;transform:scaleX(0.9979)">7</span><span class="t" style="left:92.10px;top:49.00px;font-size:13.5px;color:#1f2537;transform:scaleX(0.9948)">Lịch làm việc Phòng Triển Khai</span><span class="t" style="left:92.10px;top:66.00px;font-size:11.7px;color:#4a5265;transform:scaleX(1.0055)">Năm: <b style="color:#1f2537">2025</b></span><div class="bd" style="left:526.8px;top:59.0px"></div><span class="t" style="left:536.30px;top:57.00px;font-size:9.4px;color:#3a3db0;font-weight:bold;transform:scaleX(0.9926)">CỐ ĐỊNH</span><span class="t" style="left:681.70px;top:10.00px;font-size:13.5px;color:#252c40;transform:scaleX(0.9505)">1. Thứ 2 - Hành Chính</span><span class="t" style="left:681.70px;top:29.00px;font-size:13.5px;color:#252c40;transform:scaleX(0.9728)">2. Thứ 3 - Hành Chính</span><span class="t" style="left:681.70px;top:48.00px;font-size:13.5px;color:#252c40;transform:scaleX(0.9728)">3. Thứ 4 - Hành Chính</span><span class="t" style="left:681.70px;top:67.00px;font-size:13.5px;color:#252c40;transform:scaleX(0.9676)">4. Thứ 5 - Hành Chính</span><span class="t" style="left:681.70px;top:86.00px;font-size:13.5px;color:#252c40;transform:scaleX(0.9639)">5. Thứ 6 - Hành Chính</span><span class="t" style="left:681.70px;top:105.00px;font-size:13.5px;color:#252c40;transform:scaleX(0.9674)">6. Thứ 7 - Ca Sáng</span><span class="t" style="left:1023.80px;top:57.00px;font-size:13.5px;color:#252c40;transform:scaleX(0.9703)">Phòng Triển Khai</span><span class="t" style="left:1295.45px;top:49.00px;font-size:13.5px;color:#252c40;transform:scaleX(1.0373)">23/05/2025</span><span class="t" style="left:1275.20px;top:66.00px;font-size:11.7px;color:#4a5265;transform:scaleX(0.9417)">Người tạo: <b style="color:#1f2537">OANHNTK</b></span><svg class="abs" style="left:1517.8px;top:56.9px" width="16" height="16" viewBox="0 0 16 16"><g fill="none" stroke="#5141e0" stroke-width="1.25" stroke-linecap="round" stroke-linejoin="round"><path d="M6.4 3.600H2.700A1.7 1.7 0 0 0 1 5.300v7.600a1.7 1.7 0 0 0 1.7 1.700h7.800a1.7 1.7 0 0 0 1.7-1.700V9.4"/><path d="M3.1 12.800l.8-2.5 8.6-8.600a1.250 1.250 0 0 1 1.8 0l.2.200a1.250 1.250 0 0 1 0 1.800l-8.6 8.600z"/><path d="M11.5 2.800l1.9 1.9" stroke-width="1"/><path d="M3.1 12.800l.8-2.5 1.7 1.700z" fill="#5141e0"/></g></svg><svg class="abs" style="left:1553.3px;top:56.9px" width="15" height="16" viewBox="0 0 15 16"><g fill="none" stroke="#d9382f" stroke-width="1.25" stroke-linecap="round" stroke-linejoin="round"><path d="M1 3.700h13M4.8 3.500V2.300a1.5 1.5 0 0 1 1.5-1.500h2.400a1.5 1.5 0 0 1 1.5 1.500v1.200M2 4l.9 9.600a1.7 1.7 0 0 0 1.7 1.600h5.800a1.7 1.7 0 0 0 1.7-1.600L13 4"/><path d="M5.6 6.200l.2 6.600M9.4 6.200l-.2 6.6" stroke-width="1.4" stroke="#e0564e"/></g></svg></div>
  <div class="row" style="top:720.3px;height:136px"><span class="t" style="left:31.30px;top:57.00px;font-size:13.5px;color:#252c40;transform:scaleX(0.9979)">8</span><span class="t" style="left:92.10px;top:49.00px;font-size:13.5px;color:#1f2537;transform:scaleX(0.9913)">Lịch làm việc TTKD - Đội 2</span><span class="t" style="left:92.10px;top:66.00px;font-size:11.7px;color:#4a5265;transform:scaleX(1.0055)">Năm: <b style="color:#1f2537">2025</b></span><div class="bd" style="left:526.8px;top:59.0px"></div><span class="t" style="left:536.30px;top:57.00px;font-size:9.4px;color:#3a3db0;font-weight:bold;transform:scaleX(0.9926)">CỐ ĐỊNH</span><span class="t" style="left:681.70px;top:10.00px;font-size:13.5px;color:#252c40;transform:scaleX(0.9505)">1. Thứ 2 - Hành Chính</span><span class="t" style="left:681.70px;top:29.00px;font-size:13.5px;color:#252c40;transform:scaleX(0.9728)">2. Thứ 3 - Hành Chính</span><span class="t" style="left:681.70px;top:48.00px;font-size:13.5px;color:#252c40;transform:scaleX(0.9728)">3. Thứ 4 - Hành Chính</span><span class="t" style="left:681.70px;top:67.00px;font-size:13.5px;color:#252c40;transform:scaleX(0.9676)">4. Thứ 5 - Hành Chính</span><span class="t" style="left:681.70px;top:86.00px;font-size:13.5px;color:#252c40;transform:scaleX(0.9639)">5. Thứ 6 - Hành Chính</span><span class="t" style="left:681.70px;top:105.00px;font-size:13.5px;color:#252c40;transform:scaleX(0.9674)">6. Thứ 7 - Ca Sáng</span><span class="t" style="left:1023.80px;top:57.00px;font-size:13.5px;color:#252c40;transform:scaleX(0.9665)">TTKD- Đội 2</span><span class="t" style="left:1295.45px;top:49.00px;font-size:13.5px;color:#252c40;transform:scaleX(1.0373)">23/05/2025</span><span class="t" style="left:1275.20px;top:66.00px;font-size:11.7px;color:#4a5265;transform:scaleX(0.9417)">Người tạo: <b style="color:#1f2537">OANHNTK</b></span><svg class="abs" style="left:1517.8px;top:56.9px" width="16" height="16" viewBox="0 0 16 16"><g fill="none" stroke="#5141e0" stroke-width="1.25" stroke-linecap="round" stroke-linejoin="round"><path d="M6.4 3.600H2.700A1.7 1.7 0 0 0 1 5.300v7.600a1.7 1.7 0 0 0 1.7 1.700h7.800a1.7 1.7 0 0 0 1.7-1.700V9.4"/><path d="M3.1 12.800l.8-2.5 8.6-8.600a1.250 1.250 0 0 1 1.8 0l.2.200a1.250 1.250 0 0 1 0 1.800l-8.6 8.600z"/><path d="M11.5 2.800l1.9 1.9" stroke-width="1"/><path d="M3.1 12.800l.8-2.5 1.7 1.700z" fill="#5141e0"/></g></svg><svg class="abs" style="left:1553.3px;top:56.9px" width="15" height="16" viewBox="0 0 15 16"><g fill="none" stroke="#d9382f" stroke-width="1.25" stroke-linecap="round" stroke-linejoin="round"><path d="M1 3.700h13M4.8 3.500V2.300a1.5 1.5 0 0 1 1.5-1.500h2.400a1.5 1.5 0 0 1 1.5 1.500v1.200M2 4l.9 9.600a1.7 1.7 0 0 0 1.7 1.600h5.800a1.7 1.7 0 0 0 1.7-1.600L13 4"/><path d="M5.6 6.200l.2 6.600M9.4 6.200l-.2 6.6" stroke-width="1.4" stroke="#e0564e"/></g></svg></div>
  <div class="vl" style="left:0px"></div><div class="vl" style="left:69px"></div><div class="vl" style="left:453px"></div><div class="vl" style="left:658px"></div><div class="vl" style="left:1001px"></div><div class="vl" style="left:1207px"></div><div class="vl" style="left:1453px"></div><div class="vl" style="left:1632px"></div>
</div>
<div id="ft">
  <div class="abs" style="left:1533px;top:10px;width:23px;height:24.700px;background:#5645e0"></div>
</div>
<div class="red" style="left:12px;top:148px;width:175px;height:45.500px"></div>
<div class="red" style="left:24.500px;top:238px;width:180px;height:39px"></div>
<div class="red" style="left:254.500px;top:52px;width:109.500px;height:44.500px"></div>
<div class="red" style="left:1805px;top:269px;width:39px;height:732px"></div>
<div class="abs" style="left:1897px;top:283px;width:5px;height:388px;border-radius:2.5px;background:#c1c1c1"></div>
<span class="t" style="left:328.20px;top:14.00px;font-size:18px;color:#1a1f36;font-weight:bold;transform:scaleX(0.9773)"><span style="-webkit-text-stroke:.3px #1a1f36">Lịch làm việc</span></span>
<span class="t" style="left:270.70px;top:63.00px;font-size:14px;color:#5040e0;transform:scaleX(0.9738)">Lịch làm việc</span>
<span class="t" style="left:393.00px;top:63.00px;font-size:14px;color:#6f7685;transform:scaleX(0.9638)">Cấu hình lịch làm việc</span>
<span class="t" style="left:568.50px;top:63.00px;font-size:14px;color:#6f7685;transform:scaleX(0.9653)">Ca làm việc</span>
<span class="t" style="left:683.30px;top:63.00px;font-size:14px;color:#6f7685;transform:scaleX(0.9612)">Nhóm làm việc</span>
<span class="t" style="left:816.20px;top:63.00px;font-size:14px;color:#6f7685;transform:scaleX(0.9512)">Thời gian biểu</span>
<span class="t" style="left:336.80px;top:132.00px;font-size:14px;color:#9ca5b8;transform:scaleX(0.9207)">Tìm kiếm</span>
<span class="t" style="left:573.80px;top:132.00px;font-size:14px;color:#9ca5b8;transform:scaleX(0.9537)">Phòng ban</span>
<span class="t" style="left:840.20px;top:132.00px;font-size:14px;color:#9ca5b8;transform:scaleX(0.9854)">Trạng thái</span>
<span class="t" style="left:1027.00px;top:132.00px;font-size:14px;color:#9ca5b8;transform:scaleX(0.9849)">Loại lịch</span>
<span class="t" style="left:1830.40px;top:130.00px;font-size:14px;color:#fff;font-weight:bold;transform:scaleX(0.8588)">Tạo mới</span>
<span class="t" style="left:1684.70px;top:1038.00px;font-size:14px;color:#cdd0d6;transform:scaleX(0.7695)">«</span>
<span class="t" style="left:1702.00px;top:1038.00px;font-size:14px;color:#cdd0d6;transform:scaleX(0.9386)">Trang trước</span>
<span class="t" style="left:1790.60px;top:1038.00px;font-size:14px;color:#fff;transform:scaleX(0.6669)">1</span>
<span class="t" style="left:1816.00px;top:1038.00px;font-size:14px;color:#cdd0d6;transform:scaleX(0.9438)">Trang sau</span>
<span class="t" style="left:1886.50px;top:1038.00px;font-size:14px;color:#cdd0d6;transform:scaleX(0.7695)">»</span>
</body>
</html>
